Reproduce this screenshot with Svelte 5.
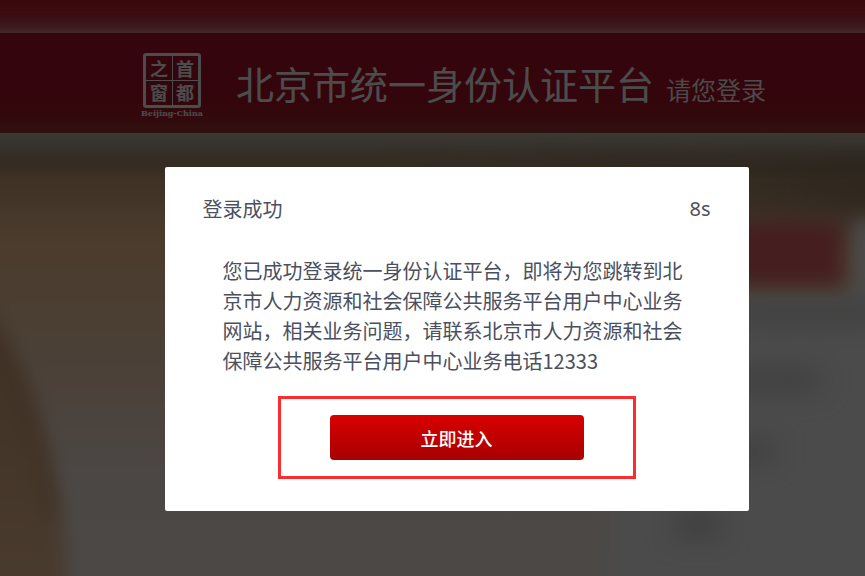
<script>
  let seconds = $state(8);
  const message =
    '您已成功登录统一身份认证平台，即将为您跳转到北京市人力资源和社会保障公共服务平台用户中心业务网站，相关业务问题，请联系北京市人力资源和社会保障公共服务平台用户中心业务电话12333';
</script>

<div class="page">
  <div class="strip"></div>
  <header>
    <div class="logo">
      <div class="seal">
        <span>之</span><span>首</span><span>窗</span><span>都</span>
      </div>
      <small>Beijing-China</small>
    </div>
    <h1>北京市统一身份认证平台</h1>
    <p>请您登录</p>
  </header>
  <main>
    <svg class="scene" viewBox="0 0 865 443" preserveAspectRatio="none" aria-hidden="true">
      <defs>
        <filter id="soft" x="-50%" y="-50%" width="200%" height="200%"><feGaussianBlur stdDeviation="9" /></filter>
        <filter id="wide" x="-50%" y="-100%" width="200%" height="300%"><feGaussianBlur stdDeviation="14" /></filter>
        <linearGradient id="arc" x1="0" y1="0" x2="0" y2="1">
          <stop offset="0" stop-color="#d2a888" />
          <stop offset="0.4" stop-color="#deae84" />
          <stop offset="1" stop-color="#f8c89c" />
        </linearGradient>
        <linearGradient id="shade" x1="0" y1="0" x2="1" y2="0">
          <stop offset="0.4" stop-color="#5a5450" stop-opacity="0" />
          <stop offset="1" stop-color="#5a5450" stop-opacity="0.5" />
        </linearGradient>
      </defs>
      <rect x="0" y="24" width="940" height="70" fill="url(#shade)" filter="url(#wide)" />
      <path d="M-40 125 C22 215 68 340 68 480 H-40Z" fill="url(#arc)" filter="url(#soft)" />
      <path d="M-10 200 C22 245 44 320 52 385" fill="none" stroke="#cf9a70" stroke-width="14" filter="url(#soft)" opacity="0.6" />
      <rect x="608" y="160" width="300" height="400" fill="#fafafa" filter="url(#soft)" />
      <rect x="852" y="88" width="60" height="140" fill="#fafafa" filter="url(#soft)" />
      <rect x="640" y="88" width="202" height="64" fill="#e6686c" filter="url(#soft)" />
      <g fill="#c4c4c4" filter="url(#wide)">
        <rect x="735" y="172" width="150" height="16" />
        <rect x="700" y="239" width="120" height="16" />
        <rect x="680" y="310" width="94" height="16" />
        <rect x="676" y="382" width="44" height="20" />
      </g>
    </svg>
  </main>

  <div class="overlay">
    <div class="dialog" role="dialog" aria-modal="true" aria-labelledby="dialog-title">
      <div class="head">
        <h2 id="dialog-title">登录成功</h2>
        <span>{seconds}s</span>
      </div>
      <p class="message">{message}</p>
      <div class="action">
        <button type="button">立即进入</button>
      </div>
    </div>
  </div>
</div>

<style>
  :global(body) {
    margin: 0;
  }
  .page {
    position: relative;
    display: flex;
    flex-direction: column;
    min-height: 100vh;
    overflow: hidden;
    font-family: 'Noto Sans CJK SC', sans-serif;
  }
  .strip {
    height: 33px;
    background: linear-gradient(180deg, #c01c2c 0%, #c22638 40%, #c85860 80%, #dc868c 100%);
  }
  header {
    display: flex;
    align-items: center;
    box-sizing: border-box;
    height: 100px;
    padding: 0 24px 0 140px;
    color: #fff;
    background: linear-gradient(180deg, #ad1128 0%, #ad1128 60%, #a8202a 85%, #a03c3c 100%);
  }
  .logo {
    display: flex;
    flex-direction: column;
    align-items: center;
    width: 64px;
    margin-right: 32px;
    padding-top: 4px;
  }
  .seal {
    display: grid;
    grid-template-columns: 1fr 1fr;
    grid-template-rows: 1fr 1fr;
    box-sizing: border-box;
    width: 58px;
    height: 55px;
    border: 3px solid #fff;
    border-radius: 3px;
    background:
      linear-gradient(#fff, #fff) center / 1px 100% no-repeat,
      linear-gradient(#fff, #fff) center / 100% 1px no-repeat;
  }
  .seal span {
    display: grid;
    place-items: center;
    font-size: 18px;
    font-weight: 700;
    line-height: 18px;
  }
  small {
    font: 700 8px/10px 'DejaVu Serif', serif;
    white-space: nowrap;
  }
  h1 {
    margin: 0;
    font-size: 38px;
    font-weight: 400;
    line-height: 56px;
    white-space: nowrap;
  }
  header p {
    margin: 12px 0 0 12px;
    font-size: 25px;
    font-weight: 350;
    line-height: 36px;
    white-space: nowrap;
  }
  main {
    flex: 1;
    display: flex;
    background:
      linear-gradient(180deg, #c8c1ad 0, #b09a84 20px, #b4946f 36px, rgba(200, 160, 115, 0.6) 46px, rgba(232, 187, 137, 0) 84px),
      linear-gradient(180deg, #e0b686 50px, #fac896 110px, #fad2aa 180px, #fadcc4 260px, #faeee4 340px, #faf2ea 100%);
  }
  .scene {
    flex: 1;
    width: 100%;
    height: auto;
    min-height: 443px;
  }
  .overlay {
    position: absolute;
    inset: 0;
    display: flex;
    align-items: flex-start;
    justify-content: center;
    padding: 167px 0 24px 48px;
    background: rgba(0, 0, 0, 0.7);
  }
  .dialog {
    box-sizing: border-box;
    width: 584px;
    padding: 27px 38px 32px;
    border-radius: 2px;
    color: #4b5061;
    background: #fff;
  }
  .head {
    display: flex;
    justify-content: space-between;
    font-size: 20px;
    line-height: 30px;
  }
  .head span {
    font-family: 'Noto Sans', sans-serif;
  }
  h2 {
    margin: 0;
    font: inherit;
    font-weight: 400;
  }
  .message {
    margin: 32px 20px 0;
    font-size: 20px;
    line-height: 30px;
  }
  .action {
    display: flex;
    box-sizing: border-box;
    width: 358px;
    margin: 20px auto 0;
    padding: 16px 49px;
    border: 3px solid #fb2d2d;
  }
  button {
    flex: 1;
    height: 45px;
    padding: 0;
    border: 0;
    border-radius: 4px;
    font: 500 18px/26px 'Noto Sans CJK SC', sans-serif;
    color: #fff;
    background: linear-gradient(180deg, #d80000, #a80000);
    cursor: pointer;
  }
</style>
